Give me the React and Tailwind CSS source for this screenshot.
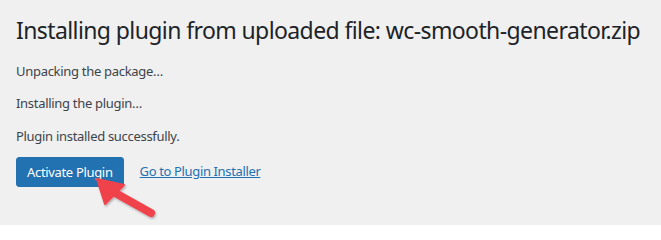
import React from "react";

export default function App() {
  return (
    <div className="relative w-[661px] h-[225px] bg-[#f0f0f1] overflow-hidden" style={{ fontFamily: '"Noto Sans", "Open Sans", sans-serif' }}>
      <div className="pl-[16px] pt-[15px] flex flex-col">
        <h1 className="text-[23px] leading-[30px] font-normal text-[#1d2327] whitespace-nowrap tracking-[-0.6px]">
          Installing plugin from uploaded file: wc-smooth-generator.zip
        </h1>
        <p className="mt-[16px] text-[13px] leading-[20px] text-[#3c434a] tracking-[-0.3px]">Unpacking the package…</p>
        <p className="mt-[12px] text-[13px] leading-[20px] text-[#3c434a] tracking-[-0.3px]">Installing the plugin…</p>
        <p className="mt-[13px] text-[13px] leading-[20px] text-[#3c434a] tracking-[-0.3px]">Plugin installed successfully.</p>
        <div className="mt-[11px] flex items-center gap-[16px]">
          <button className="h-[30px] px-[10px] rounded-[3px] bg-[#2271b1] text-white text-[13px] leading-[28px] border border-[#2271b1] tracking-[-0.33px]">
            Activate Plugin
          </button>
          <a href="#" className="text-[13px] text-[#2271b1] underline tracking-[-0.36px]">Go to Plugin Installer</a>
        </div>
      </div>
      <svg className="absolute left-0 top-0" width="661" height="225" viewBox="0 0 661 225">
        <defs>
          <filter id="sh" x="-20%" y="-20%" width="140%" height="140%">
            <feDropShadow dx="1" dy="1.5" stdDeviation="1" floodColor="#000" floodOpacity="0.3" />
          </filter>
        </defs>
        <g filter="url(#sh)">
          <line x1="151" y1="213" x2="110" y2="190" stroke="#f0424b" strokeWidth="8" strokeLinecap="round" />
          <polygon points="97,179 124,185 105,204" fill="#f0424b" stroke="#f0424b" strokeWidth="2" strokeLinejoin="round" />
        </g>
      </svg>
    </div>
  );
}
